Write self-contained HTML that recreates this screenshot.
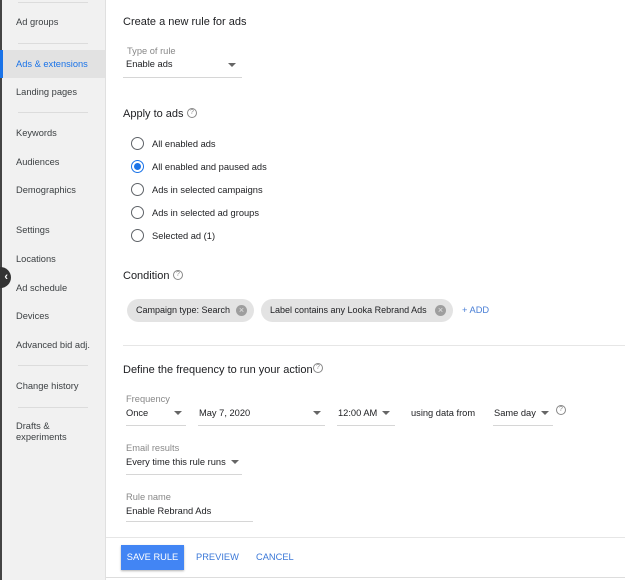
<!DOCTYPE html><html><head><style>
body{margin:0;width:625px;height:580px;overflow:hidden;font-family:"Liberation Sans",Arial,sans-serif;background:#fff;position:relative}
.a{position:absolute;white-space:nowrap}
#sb{position:absolute;left:0;top:0;width:105px;height:580px;background:#f1f1f1;border-right:1px solid #e0e0e0}
.s{position:absolute;left:16px;font-size:9.3px;color:#3c4043;transform:translateY(-50%)}
.sep{position:absolute;left:18px;width:70px;height:1px;background:#dcdcdc}
.t{font-size:11px;color:#202124;transform:translateY(-50%)}
.l{font-size:9.3px;color:#888;transform:translateY(-50%)}
.v{font-size:9.3px;color:#202124;transform:translateY(-50%)}
.ul{position:absolute;height:1px;background:#d6d6d6}
.ar{position:absolute;width:0;height:0;border-left:4px solid transparent;border-right:4px solid transparent;border-top:4px solid #666}
.r{position:absolute;left:131px;width:11px;height:11px;border:1.5px solid #5f6368;border-radius:50%}
.q{position:absolute;width:8px;height:8px;border:1px solid #888;border-radius:50%;font-size:7px;color:#888;text-align:center;line-height:8px}
.chip{position:absolute;top:299px;height:23px;background:#e3e3e3;border-radius:12px;font-size:9px;color:#202124;line-height:23px;padding-left:9px;box-sizing:border-box}
.x{position:absolute;top:6px;width:11px;height:11px;border-radius:50%;background:#9e9e9e;color:#e3e3e3;font-size:9px;line-height:11px;text-align:center}
</style></head><body>
<div id="sb">
<div style="position:absolute;left:0;top:0;width:2px;height:580px;background:#444"></div>
<div class="sep" style="top:2px"></div>
<div class="s" style="top:22px">Ad groups</div>
<div class="sep" style="top:43px"></div>
<div style="position:absolute;left:0;top:50px;width:105px;height:28px;background:#e2e2e2;border-left:3px solid #1a73e8;box-sizing:border-box"></div>
<div class="s" style="top:64px;color:#1a73e8">Ads &amp; extensions</div>
<div class="s" style="top:92px">Landing pages</div>
<div class="sep" style="top:112px"></div>
<div class="s" style="top:133px">Keywords</div>
<div class="s" style="top:162px">Audiences</div>
<div class="s" style="top:190px">Demographics</div>
<div class="s" style="top:230px">Settings</div>
<div class="s" style="top:259px">Locations</div>
<div class="s" style="top:288px">Ad schedule</div>
<div class="s" style="top:316px">Devices</div>
<div class="s" style="top:345px">Advanced bid adj.</div>
<div class="sep" style="top:365px"></div>
<div class="s" style="top:386px">Change history</div>
<div class="sep" style="top:407px"></div>
<div class="s" style="top:432px;line-height:11px">Drafts &amp;<br>experiments</div>
</div>
<div style="position:absolute;left:-10px;top:267px;width:21px;height:21px;border-radius:50%;background:#333;color:#fff;font-size:11px;line-height:21px;text-align:right;padding-right:3px;box-sizing:border-box;font-weight:bold">‹</div>

<div class="a t" style="left:123px;top:22px">Create a new rule for ads</div>
<div class="a l" style="left:127px;top:51px">Type of rule</div>
<div class="a v" style="left:126px;top:64px">Enable ads</div>
<div class="ar" style="left:228px;top:63px"></div>
<div class="ul" style="left:123px;top:77px;width:119px"></div>

<div class="a t" style="left:123px;top:114px">Apply to ads</div>
<div class="q" style="left:187px;top:108px">?</div>
<div class="r" style="top:137px"></div>
<div class="r" style="top:160px;border-color:#1a73e8"><div style="position:absolute;left:2px;top:2px;width:7px;height:7px;border-radius:50%;background:#1a73e8"></div></div>
<div class="r" style="top:183px"></div>
<div class="r" style="top:206px"></div>
<div class="r" style="top:229px"></div>
<div class="a v" style="left:152px;top:144px">All enabled ads</div>
<div class="a v" style="left:152px;top:167px">All enabled and paused ads</div>
<div class="a v" style="left:152px;top:190px">Ads in selected campaigns</div>
<div class="a v" style="left:152px;top:213px">Ads in selected ad groups</div>
<div class="a v" style="left:152px;top:236px">Selected ad (1)</div>

<div class="a t" style="left:123px;top:276px">Condition</div>
<div class="q" style="left:173px;top:270px">?</div>
<div class="chip" style="left:127px;width:127px">Campaign type: Search<div class="x" style="left:109px">×</div></div>
<div class="chip" style="left:261px;width:192px">Label contains any Looka Rebrand Ads<div class="x" style="left:174px">×</div></div>
<div class="a" style="left:462px;top:305px;font-size:9.3px;color:#4a7fd6">+ ADD</div>
<div class="ul" style="left:123px;top:345px;width:502px;background:#e6e6e6"></div>

<div class="a t" style="left:123px;top:370px">Define the frequency to run your action</div>
<div class="q" style="left:313px;top:363px">?</div>
<div class="a l" style="left:126px;top:399px">Frequency</div>
<div class="a v" style="left:126px;top:413px">Once</div><div class="ar" style="left:174px;top:411px"></div><div class="ul" style="left:126px;top:425px;width:60px"></div>
<div class="a v" style="left:199px;top:413px">May 7, 2020</div><div class="ar" style="left:313px;top:411px"></div><div class="ul" style="left:198px;top:425px;width:127px"></div>
<div class="a v" style="left:338px;top:413px">12:00 AM</div><div class="ar" style="left:382px;top:411px"></div><div class="ul" style="left:337px;top:425px;width:58px"></div>
<div class="a v" style="left:411px;top:413px">using data from</div>
<div class="a v" style="left:494px;top:413px">Same day</div><div class="ar" style="left:541px;top:411px"></div><div class="ul" style="left:493px;top:425px;width:60px"></div>
<div class="q" style="left:556px;top:405px">?</div>
<div class="a l" style="left:126px;top:448px">Email results</div>
<div class="a v" style="left:126px;top:462px">Every time this rule runs</div><div class="ar" style="left:231px;top:460px"></div><div class="ul" style="left:126px;top:474px;width:116px"></div>
<div class="a l" style="left:126px;top:497px">Rule name</div>
<div class="a v" style="left:126px;top:511px">Enable Rebrand Ads</div><div class="ul" style="left:126px;top:521px;width:127px"></div>

<div class="ul" style="left:106px;top:537px;width:519px;background:#e6e6e6"></div>
<div class="a" style="left:121px;top:545px;width:63px;height:25px;background:#4285f4;color:#fff;font-size:9.3px;line-height:25px;text-align:center;box-shadow:0 1px 2px rgba(0,0,0,.3)">SAVE RULE</div>
<div class="a" style="left:196px;top:552px;font-size:9.3px;color:#3b78d8">PREVIEW</div>
<div class="a" style="left:256px;top:552px;font-size:9.3px;color:#3b78d8">CANCEL</div>
<div class="ul" style="left:106px;top:577px;width:519px;background:#ddd"></div>
</body></html>
